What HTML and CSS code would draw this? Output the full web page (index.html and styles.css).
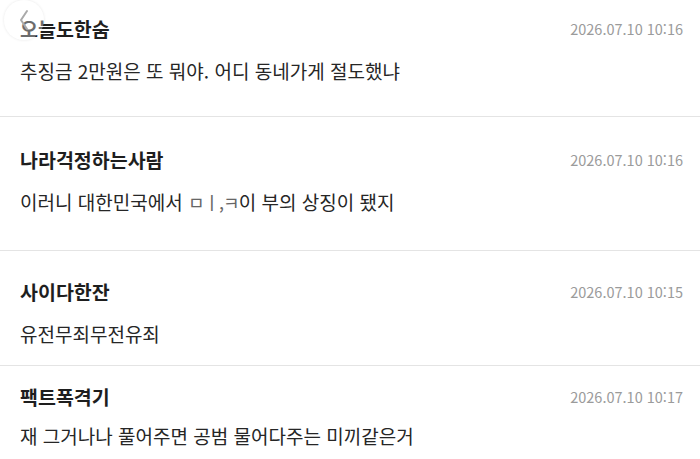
FILE: index.html
```html
<!DOCTYPE html>
<html lang="ko">
<head>
  <meta charset="UTF-8" />
  <title>댓글</title>
  <link rel="stylesheet" href="styles.css">
</head>
<body>

<!-- back button floats over the first comment -->
<button class="back-btn" aria-label="뒤로">
  <svg width="12" height="24" viewBox="0 0 12 24">
    <path d="M9 3 L3 12 L9 21" fill="none" stroke="#aaa" stroke-width="2" stroke-linecap="round" stroke-linejoin="round"/>
  </svg>
</button>

<ul class="comments">
  <li class="comment first">
    <div class="comment-head">
      <span class="name">오늘도한숨</span>
      <span class="date">2026.07.10 10:16</span>
    </div>
    <p class="text">추징금 2만원은 또 뭐야. 어디 동네가게 절도했냐</p>
  </li>
  <li class="comment second">
    <div class="comment-head">
      <span class="name">나라걱정하는사람</span>
      <span class="date">2026.07.10 10:16</span>
    </div>
    <p class="text">이러니 대한민국에서 <span class="broken">ㅁㅣ,ㅋ</span>이 부의 상징이 됐지</p>
  </li>
  <li class="comment third">
    <div class="comment-head">
      <span class="name">사이다한잔</span>
      <span class="date">2026.07.10 10:15</span>
    </div>
    <p class="text">유전무죄무전유죄</p>
  </li>
  <li class="comment last">
    <div class="comment-head">
      <span class="name">팩트폭격기</span>
      <span class="date">2026.07.10 10:17</span>
    </div>
    <p class="text">재 그거나나 풀어주면 공범 물어다주는 미끼같은거</p>
  </li>
</ul>

</body>
</html>
```

FILE: styles.css
```css
body {
  margin: 0;
  background: #fff;
  font-family: "Noto Sans CJK KR", "Noto Sans", sans-serif;
  color: #222;
  overflow: hidden;
}
.back-btn {
  position: absolute;
  left: 4px;
  top: 0;
  width: 40px;
  height: 40px;
  border: none;
  border-radius: 50%;
  background: rgba(255, 255, 255, 0.35);
  box-shadow: 0 0 3px rgba(0, 0, 0, 0.1);
  display: flex;
  align-items: center;
  justify-content: center;
  padding: 0;
}
.comments {
  list-style: none;
  margin: 0;
  padding: 0;
}
.comment {
  padding: 29px 17px 0 20px;
  border-bottom: 1.5px solid #e4e4e4;
}
.comment-head {
  display: flex;
  justify-content: space-between;
  align-items: center;
  height: 26px;
}
.name {
  font-size: 19.5px;
  font-weight: 700;
  color: #1e1e1e;
}
.date {
  font-size: 14.5px;
  color: #9b9b9b;
}
.text {
  margin: 18px 0 0;
  font-size: 19px;
  line-height: 24px;
  color: #262626;
}
.broken {
  color: #666;
  font-size: 18px;
  letter-spacing: -1px;
}
.first {
  padding-top: 15px;
  padding-bottom: 33px;
}
.second {
  padding-bottom: 36px;
}
.third {
  padding-top: 27px;
  padding-bottom: 19px;
}
.last {
  padding-top: 17px;
  border-bottom: none;
}
.last .text {
  margin-top: 15px;
}
```
